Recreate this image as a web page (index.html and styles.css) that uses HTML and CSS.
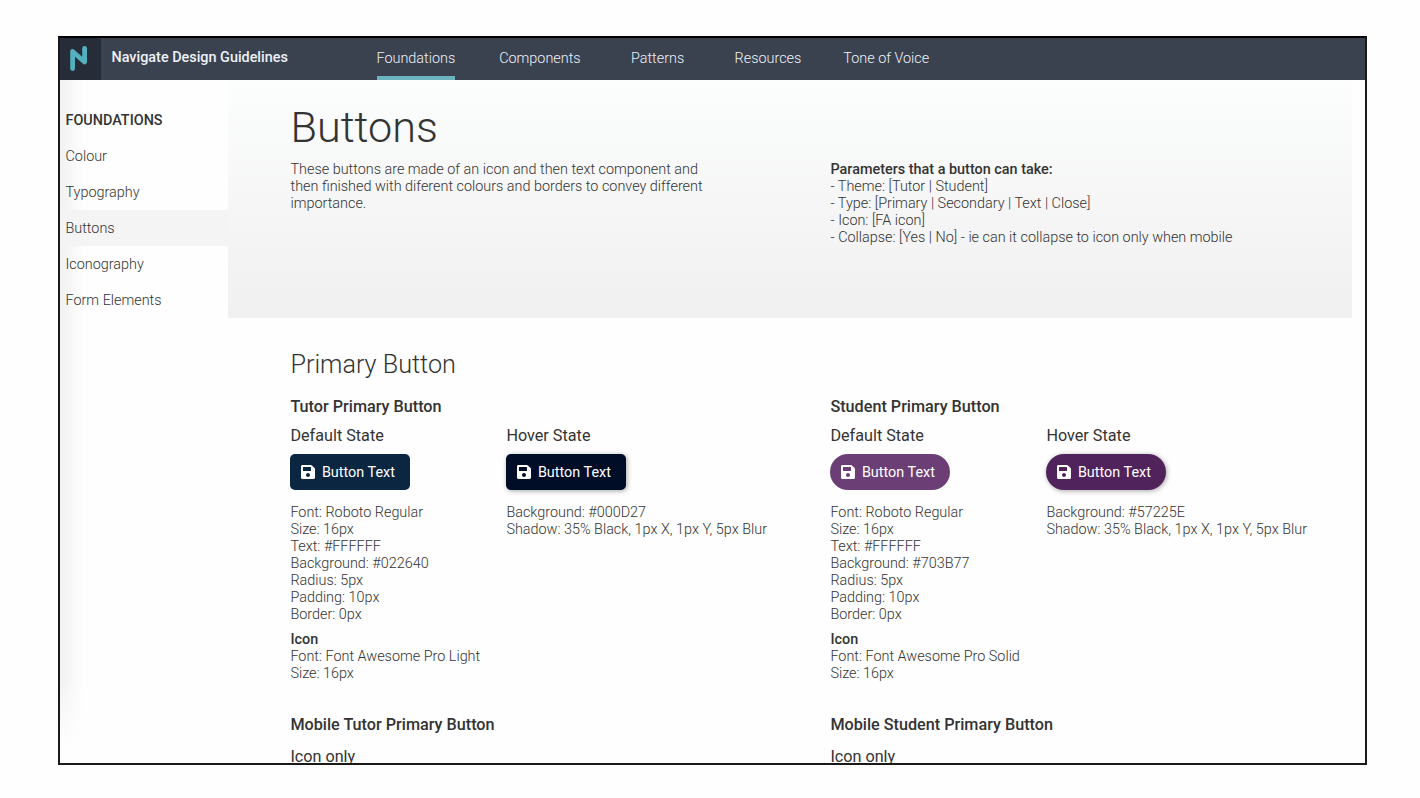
FILE: index.html
```html
<!DOCTYPE html>
<html lang="en">

<head>
    <meta charset="utf-8">
    <title>Navigate Design Guidelines</title>
    <link rel="stylesheet" href="styles.css">
</head>

<body>

    <svg class="sprite">
        <symbol id="save" viewBox="0 0 448 512">
            <path d="M433.9 129.9l-83.9-83.9A48 48 0 0 0 316.1 32H48C21.5 32 0 53.5 0 80v352c0 26.5 21.5 48 48 48h352c26.5 0 48-21.5 48-48V163.9a48 48 0 0 0-14.1-34zM224 416c-35.3 0-64-28.7-64-64s28.7-64 64-64 64 28.7 64 64-28.7 64-64 64zm96-304.5V212c0 6.6-5.4 12-12 12H76c-6.6 0-12-5.4-12-12V108c0-6.6 5.4-12 12-12h228.5c3.2 0 6.2 1.3 8.5 3.5l3.5 3.5a12 12 0 0 1 3.5 8.5z"/>
        </symbol>
    </svg>

    <div class="frame">
        <header class="header">
            <div class="logo">
                <svg width="41" height="42" viewBox="0 0 41 42">
                    <path d="M12.6 30.5V13.5L24.6 24V10.3" fill="none" stroke="#54b0bf" stroke-width="4.8" stroke-linecap="round" stroke-linejoin="round"/>
                </svg>
            </div>
            <div class="brand">Navigate Design Guidelines</div>
            <nav class="nav">
                <a class="active">Foundations</a>
                <a>Components</a>
                <a>Patterns</a>
                <a>Resources</a>
                <a>Tone of Voice</a>
            </nav>
        </header>

        <div class="page">
            <aside class="sidebar">
                <h4>FOUNDATIONS</h4>
                <a>Colour</a>
                <a>Typography</a>
                <a class="current">Buttons</a>
                <a>Iconography</a>
                <a>Form Elements</a>
            </aside>

            <main class="main">
                <section class="hero">
                    <div class="intro">
                        <h1>Buttons</h1>
                        <p>These buttons are made of an icon and then text component and then finished with diferent colours and borders to convey different importance.</p>
                    </div>
                    <div class="params">
                        <b>Parameters that a button can take:</b><br>
                        - Theme: [Tutor | Student]<br>
                        - Type: [Primary | Secondary | Text | Close]<br>
                        - Icon: [FA icon]<br>
                        - Collapse: [Yes | No] - ie can it collapse to icon only when mobile
                    </div>
                </section>

                <section class="content">
                    <h2>Primary Button</h2>
                    <div class="themes">
                        <div class="theme">
                            <h3>Tutor Primary Button</h3>
                            <div class="states">
                                <div class="state">
                                    <h5>Default State</h5>
                                    <button class="btn tutor"><svg class="icon"><use href="#save"/></svg>Button Text</button>
                                    <p>Font: Roboto Regular<br>Size: 16px<br>Text: #FFFFFF<br>Background: #022640<br>Radius: 5px<br>Padding: 10px<br>Border: 0px</p>
                                    <p class="icon-spec"><b>Icon</b><br>Font: Font Awesome Pro Light<br>Size: 16px</p>
                                </div>
                                <div class="state">
                                    <h5>Hover State</h5>
                                    <button class="btn tutor hover"><svg class="icon"><use href="#save"/></svg>Button Text</button>
                                    <p>Background: #000D27<br>Shadow: 35% Black, 1px X, 1px Y, 5px Blur</p>
                                </div>
                            </div>
                            <h3 class="mobile">Mobile Tutor Primary Button</h3>
                            <h5>Icon only</h5>
                        </div>

                        <div class="theme">
                            <h3>Student Primary Button</h3>
                            <div class="states">
                                <div class="state">
                                    <h5>Default State</h5>
                                    <button class="btn student"><svg class="icon"><use href="#save"/></svg>Button Text</button>
                                    <p>Font: Roboto Regular<br>Size: 16px<br>Text: #FFFFFF<br>Background: #703B77<br>Radius: 5px<br>Padding: 10px<br>Border: 0px</p>
                                    <p class="icon-spec"><b>Icon</b><br>Font: Font Awesome Pro Solid<br>Size: 16px</p>
                                </div>
                                <div class="state">
                                    <h5>Hover State</h5>
                                    <button class="btn student hover"><svg class="icon"><use href="#save"/></svg>Button Text</button>
                                    <p>Background: #57225E<br>Shadow: 35% Black, 1px X, 1px Y, 5px Blur</p>
                                </div>
                            </div>
                            <h3 class="mobile">Mobile Student Primary Button</h3>
                            <h5>Icon only</h5>
                        </div>
                    </div>
                </section>
            </main>
        </div>
    </div>

</body>

</html>
```
FILE: styles.css
```css
* {
    box-sizing: border-box;
}

body {
    margin: 0;
    padding: 36px 0 0 58px;
    height: 798px;
    overflow: hidden;
    background-color: #fefefe;
    font-family: Roboto, sans-serif;
    font-size: 14.4px;
    font-weight: 300;
    line-height: 17px;
    color: #333;
}

h1, h2, h3, h4, h5, p {
    margin: 0;
}

b {
    font-weight: 500;
}

.sprite {
    display: none;
}

.frame {
    width: 1309px;
    height: 729px;
    border: 2px solid #1a1a1a;
    border-top-color: #000;
    overflow: hidden;
    background-color: #fefefe;
}

.header {
    display: flex;
    height: 42px;
    background-color: #3a4250;
    color: #eef1f8;
}

.logo {
    width: 41px;
    height: 42px;
    background-color: #272d38;
}

.brand {
    width: 275.5px;
    padding: 11px 0 0 10.5px;
    font-weight: 500;
}

.nav {
    display: flex;
    gap: 44px;
}

.nav a {
    min-width: 66px;
    height: 42px;
    padding-top: 12px;
    text-align: center;
    white-space: nowrap;
}

.nav a:last-child {
    margin-left: -2px;
}

.nav .active {
    border-bottom: 4px solid #6bb3bd;
}

.page {
    display: flex;
    height: 683px;
}

.sidebar {
    width: 168px;
    padding-top: 22px;
    background: linear-gradient(rgba(255, 255, 255, 0) 600px, #fefefe 665px), linear-gradient(to right, #f1f1f1, #fefefe 24px);
}

.sidebar h4,
.sidebar a {
    display: block;
    height: 36px;
    padding: 1px 0 0 5.5px;
    font-size: 14.4px;
    line-height: 36px;
}

.sidebar h4 {
    font-weight: 500;
}

.sidebar .current {
    background-color: #f4f4f4;
}

.main {
    width: 1124px;
}

.hero {
    display: flex;
    height: 238px;
    padding-left: 62.5px;
    background: linear-gradient(#fcfdfd, #f5f5f5 60%, #f0f0f0);
}

.intro {
    width: 540px;
    padding-top: 22px;
}

.intro p {
    width: 425px;
    padding-top: 7px;
}

h1 {
    font-size: 43.2px;
    font-weight: 300;
    line-height: 52px;
}

.params {
    padding-top: 81px;
}

.content {
    padding: 30px 0 0 62.4px;
}

h2 {
    font-size: 25.2px;
    font-weight: 300;
    line-height: 34px;
}

.themes {
    display: flex;
    padding-top: 15px;
}

.theme {
    width: 540px;
    flex-shrink: 0;
}

h3 {
    font-size: 16.2px;
    font-weight: 500;
    line-height: 20px;
}

h5 {
    padding-top: 9px;
    font-size: 16.2px;
    font-weight: 400;
    line-height: 20px;
}

.states {
    display: flex;
}

.state {
    width: 216px;
    white-space: nowrap;
}

.state p {
    padding-top: 14px;
}

.state .icon-spec {
    padding-top: 8px;
}

.btn {
    display: flex;
    align-items: center;
    gap: 6.5px;
    width: 120px;
    height: 36px;
    margin-top: 8px;
    padding: 0 0 0 11px;
    border: 0;
    border-radius: 5px;
    color: #fff;
    font-family: inherit;
    font-size: 14.4px;
    font-weight: 400;
    white-space: nowrap;
}

.icon {
    width: 14px;
    height: 16px;
    fill: currentColor;
}

.tutor {
    background-color: #0a2641;
}

.tutor.hover {
    background-color: #000d27;
}

.student {
    border-radius: 18px;
    background-color: #6b3f75;
}

.student.hover {
    background-color: #51235c;
}

.hover {
    box-shadow: 1px 1px 5px rgba(0, 0, 0, 0.35);
}

.mobile {
    margin-top: 33px;
}

.mobile + h5 {
    padding-top: 12px;
}
```
